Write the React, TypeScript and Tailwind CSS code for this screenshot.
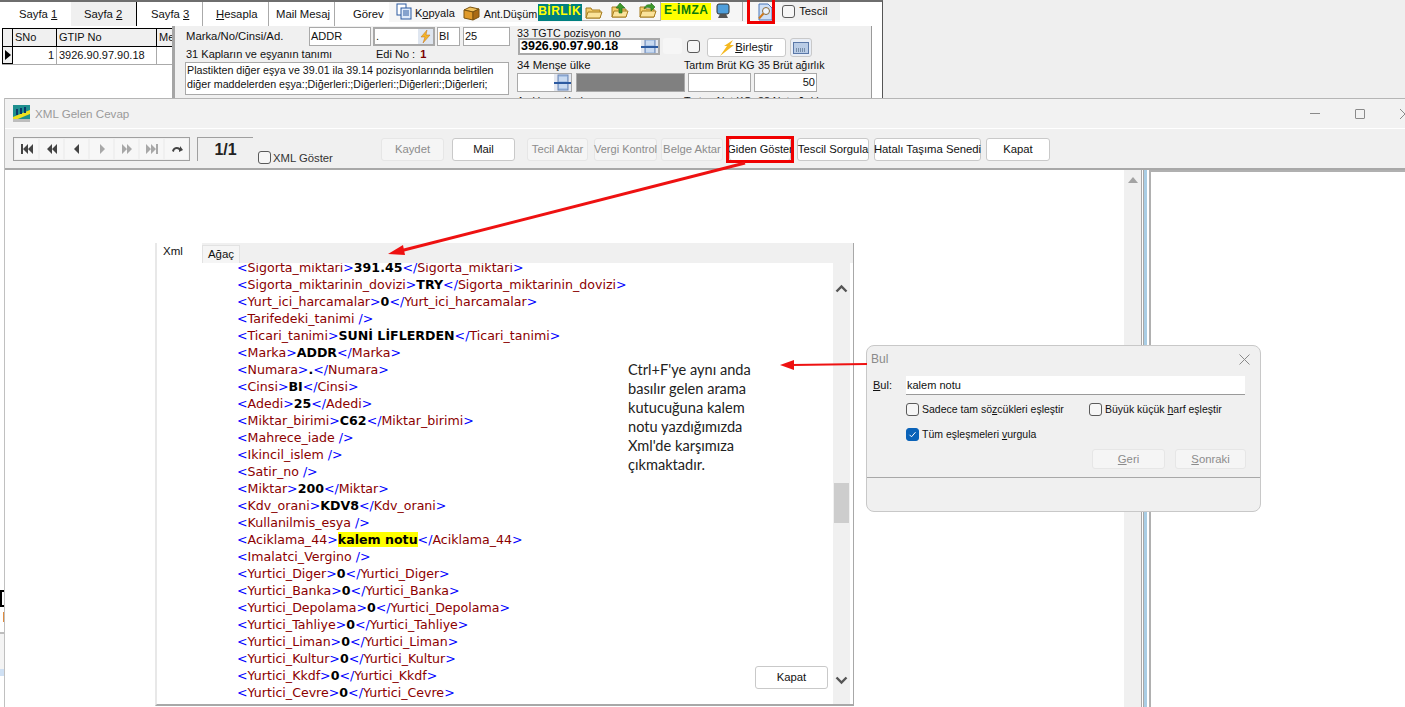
import React from "react";

const ui = { fontFamily: '"Liberation Sans", Arial, sans-serif' };

function Tab({ className, children }: { className: string; children: React.ReactNode }) {
  return <div className={`flex items-center h-[24px] text-[11.3px] text-[#111] whitespace-nowrap ${className}`}>{children}</div>;
}

function U({ children }: { children: React.ReactNode }) {
  return <span className="underline underline-offset-1">{children}</span>;
}

function Field({ className, children }: { className: string; children?: React.ReactNode }) {
  return (
    <div className={`flex items-center bg-white border-2 border-[#a9a9a9] px-[1px] text-[11px] text-[#111] overflow-hidden whitespace-nowrap ${className}`}>
      {children}
    </div>
  );
}

function LookupIcon() {
  return (
    <svg width="17" height="17" viewBox="0 0 17 17" className="shrink-0">
      <rect width="17" height="17" fill="#e4e8f0" />
      <rect x="4" y="1" width="10" height="15" fill="#a9c3e6" stroke="#6b86b5" />
      <path d="M5 4h8M5 6h8M5 11h8M5 13h8" stroke="#e8f0fa" />
      <rect x="0" y="8" width="17" height="2" fill="#2c5aa0" />
    </svg>
  );
}

function Folder({ arrow }: { arrow?: "up" | "right" }) {
  return (
    <svg width="18" height="18" viewBox="0 0 18 18">
      <path d="M1 15V5h5l1 2h8v8z" fill="#f4cd6a" stroke="#a67c1e" />
      <path d="M1 15l2-6h14l-2 6z" fill="#fbe39a" stroke="#a67c1e" />
      {arrow === "up" && <path d="M9 1l5 5h-3v5H8V6H5z" fill="#3d9a2c" stroke="#1e6a14" strokeWidth="0.6" />}
      {arrow === "right" && <path d="M5 7c1-4 4-5 7-4V1l4 4-4 4V6C9 5 7 5 5 7z" fill="#3d9a2c" stroke="#1e6a14" strokeWidth="0.6" />}
    </svg>
  );
}

function Btn({
  w,
  disabled,
  children,
  className,
}: {
  w: string;
  disabled?: boolean;
  children: React.ReactNode;
  className?: string;
}) {
  return (
    <div
      className={`flex items-center justify-center shrink-0 h-[23px] rounded-[3px] border text-[11.3px] whitespace-nowrap ${w} ${
        disabled ? "bg-[#f5f5f5] border-[#e6e6e6] text-[#8c8c8c]" : "bg-white border-[#c9c9c9] text-[#111]"
      } ${className ?? ""}`}
    >
      {children}
    </div>
  );
}

function NavBtn({ d, dim }: { d: string; dim?: boolean }) {
  return (
    <div className="flex items-center justify-center w-[23px] h-[20px] bg-[#f7f7f7]">
      <svg width="12" height="10" viewBox="0 0 12 10">
        <path d={d} fill={dim ? "#a8a8a8" : "#444"} />
      </svg>
    </div>
  );
}

function CheckBox({ checked, className }: { checked?: boolean; className?: string }) {
  return (
    <span
      className={`flex items-center justify-center shrink-0 w-[13px] h-[13px] rounded-[3px] border ${
        checked ? "bg-[#0a62b8] border-[#0a62b8]" : "bg-[#f6f6f6] border-[#5a5a5a]"
      } ${className ?? ""}`}
    >
      {checked && (
        <svg width="9" height="9" viewBox="0 0 9 9">
          <path d="M1.5 4.8l2 2 4-4.6" fill="none" stroke="#fff" strokeWidth="1" />
        </svg>
      )}
    </span>
  );
}

const T = ({ children }: { children: React.ReactNode }) => <span className="text-[#0000ff]">{children}</span>;
const N = ({ children }: { children: React.ReactNode }) => <span className="text-[#8b0000]">{children}</span>;

function Pair({ n, v, mark }: { n: string; v: string; mark?: boolean }) {
  return (
    <div className="h-[17px] leading-[17px]">
      <T>&lt;</T>
      <N>{n}</N>
      <T>&gt;</T>
      <b className={`text-black ${mark ? "bg-[#ffff00]" : ""}`}>{v}</b>
      <T>&lt;/</T>
      <N>{n}</N>
      <T>&gt;</T>
    </div>
  );
}

function Empty({ n }: { n: string }) {
  return (
    <div className="h-[17px] leading-[17px]">
      <T>&lt;</T>
      <N>{n}</N>
      <T> /&gt;</T>
    </div>
  );
}

export default function App() {
  return (
    <div className="relative w-[1405px] h-[707px] overflow-hidden bg-[#f0f0f0]" style={ui}>
      {/* Background application */}
      <div className="flex h-[98px] overflow-hidden">
        <div className="w-[883px] shrink-0 border-t-2 border-[#6e6e6e] border-r border-r-[#555] bg-white">
          <div className="flex h-[24px]">
            <Tab className="w-[71px] pl-[19px]">Sayfa&nbsp;<U>1</U></Tab>
            <Tab className="w-[66px] pl-[13px] bg-[#f0f0f0] border-r border-black">Sayfa&nbsp;<U>2</U></Tab>
            <Tab className="w-[66px] pl-[14px] border-r border-[#aaa]">Sayfa&nbsp;<U>3</U></Tab>
            <Tab className="w-[66px] pl-[13px] border-r border-[#aaa]"><U>H</U>esapla</Tab>
            <Tab className="w-[66px] pl-[7px] border-r border-[#aaa]">Mail Mesaj</Tab>
            <Tab className="w-[54px] pl-[18px]">Görev</Tab>
            <div className="flex items-start h-[20px] w-[451px] bg-[#f6f6f6]">
              <div className="ml-[7px] mt-[1px]">
                <svg width="16" height="17" viewBox="0 0 16 17">
                  <rect x="1" y="1" width="9" height="11" fill="#fff" stroke="#2c5aa0" />
                  <rect x="5" y="5" width="10" height="11" fill="#dfeafa" stroke="#2c5aa0" />
                  <path d="M7 8h6M7 10h6M7 12h6" stroke="#2c5aa0" />
                </svg>
              </div>
              <span className="ml-[3px] mt-[3px] w-[45px] text-[11px] text-[#111] whitespace-nowrap">K<U>o</U>pyala</span>
              <div className="ml-[3px] mt-[3px]">
                <svg width="17" height="16" viewBox="0 0 17 16">
                  <path d="M1 5l6-3 9 2-6 3z" fill="#f2c25c" stroke="#7a5310" />
                  <path d="M1 5v8l9 2V7z" fill="#e09a2b" stroke="#7a5310" />
                  <path d="M10 7v8l6-3V4z" fill="#a96a14" stroke="#7a5310" />
                </svg>
              </div>
              <span className="ml-[4px] mt-[4px] w-[54px] text-[10.8px] text-[#111] whitespace-nowrap">Ant.Düşüm</span>
              <div className="h-[17px] mt-[2px] w-[44px] bg-[#008080] text-[#ffff00] text-[12px] font-bold leading-[14px] text-center tracking-[0.5px]">BİRLİK</div>
              <div className="flex items-start w-[80px] h-[19px] border-b border-r border-[#b5b5b5]">
                <span className="ml-[3px] mt-[1px]"><Folder /></span>
                <span className="ml-[8px]"><Folder arrow="up" /></span>
                <span className="ml-[10px]"><Folder arrow="right" /></span>
              </div>
              <div className="h-[17px] mt-[1px] w-[50px] bg-[#ffff00] text-[#0a7a0a] text-[12px] font-bold leading-[15px] text-center tracking-[0.5px]">E-İMZA</div>
              <div className="ml-[5px] mt-[1px]">
                <svg width="14" height="17" viewBox="0 0 14 17">
                  <rect x="1" y="1" width="12" height="10" rx="2" fill="#4f9fdc" stroke="#333" />
                  <path d="M4 11h6l2 4H2z" fill="#555" />
                </svg>
              </div>
              <div className="ml-[12px] h-[19px] border-l border-[#aaa]" />
              <div className="ml-[14px] mt-[1px]">
                <svg width="16" height="18" viewBox="0 0 16 18">
                  <path d="M2 1h9l4 4v12H2z" fill="#cfe0f7" stroke="#4a76b8" />
                  <circle cx="9" cy="8" r="3.5" fill="#eef5ff" stroke="#8a6a3a" />
                  <path d="M6.500 10.500L2 15.500" stroke="#d07a1e" strokeWidth="2" />
                </svg>
              </div>
              <div className="flex items-center ml-[9px] h-[18px] w-[58px] bg-[#f0f0f0]">
                <CheckBox />
                <span className="ml-[4px] text-[11.3px] text-[#111]">Tescil</span>
              </div>
            </div>
          </div>

          <div className="flex h-[72px]">
            {/* Grid */}
            <div className="w-[172px] shrink-0 pl-[2px] pt-[2px] text-[11px] text-[#111]">
              <div className="flex h-[19px] bg-[#f0f0f0] border-y border-l border-black">
                <div className="w-[10px] border-r border-black" />
                <div className="w-[44px] border-r border-black pl-[2px] leading-[17px]">SNo</div>
                <div className="w-[100px] border-r border-black pl-[2px] leading-[17px]">GTIP No</div>
                <div className="flex-1 overflow-hidden pl-[2px] leading-[17px]">Me</div>
              </div>
              <div className="flex h-[18px] border-b border-[#aaa]">
                <div className="flex items-center justify-center w-[11px] bg-[#f0f0f0] border-x border-b border-black">
                  <svg width="6" height="10" viewBox="0 0 6 10"><path d="M0 0l6 5-6 5z" fill="#000" /></svg>
                </div>
                <div className="w-[44px] border-r border-[#aaa] text-right pr-[2px] leading-[17px]">1</div>
                <div className="w-[100px] border-r border-[#aaa] pl-[2px] leading-[17px]">3926.90.97.90.18</div>
              </div>
            </div>
            <div className="w-[3px] shrink-0 bg-[#a5a5a5]" />
            {/* Form */}
            <div className="flex w-[697px] shrink-0 bg-[#f0f0f0] border-r border-[#9a9a9a] pl-[11px] text-[11.3px] text-[#111]">
              <div className="w-[331px] shrink-0 pt-[1px]">
                <div className="flex items-center gap-[2px] h-[19px]">
                  <span className="w-[121px] whitespace-nowrap">Marka/No/Cinsi/Ad.</span>
                  <Field className="w-[62px] h-[19px] !border !border-[#a9a9a9]">ADDR</Field>
                  <Field className="w-[62px] h-[19px] justify-between !pr-0">
                    <span>.</span>
                    <svg width="15" height="15" viewBox="0 0 15 15">
                      <rect width="15" height="15" fill="#dfe6f0" />
                      <path d="M9 1L3 8h4l-2 6 7-8H8z" fill="#f3b52a" stroke="#c46f10" strokeWidth="0.5" />
                    </svg>
                  </Field>
                  <Field className="w-[23px] h-[19px] !border !border-[#a9a9a9]">BI</Field>
                  <Field className="w-[47px] h-[19px] ml-[1px] !border !border-[#a9a9a9]">25</Field>
                </div>
                <div className="flex items-center h-[16px] whitespace-nowrap text-[11px]">
                  <span className="w-[190px]">31 Kapların ve eşyanın tanımı</span>
                  <span>Edi No :</span>
                  <b className="ml-[5px] text-[#7a0000]">1</b>
                </div>
                <div className="w-[324px] h-[33px] -ml-[1px] bg-white border border-[#a9a9a9] px-[1px] leading-[14px] text-[10.7px] whitespace-nowrap overflow-hidden">
                  Plastikten diğer eşya ve 39.01 ila 39.14 pozisyonlarında belirtilen
                  <br />
                  diğer maddelerden eşya:;Diğerleri:;Diğerleri:;Diğerleri:;Diğerleri;
                </div>
                <div className="h-[12px] mt-[1px] -ml-[1px] leading-[14px]">Sigorta Kıymeti</div>
              </div>
              <div className="flex-1">
                <div className="h-[12px] leading-[14px] whitespace-nowrap text-[10.7px]">33 TGTC pozisyon no</div>
                <div className="flex items-start h-[20px] pl-[1px]">
                  <Field className="w-[142px] h-[17px] justify-between !pl-[1px] !pr-0">
                    <b className="text-[12.5px] text-black">3926.90.97.90.18</b>
                    <LookupIcon />
                  </Field>
                  <div className="w-[19px] h-[16px] ml-[3px] rounded-[3px] bg-[#f6f6f6]" />
                  <CheckBox className="ml-[5px] mt-[2px]" />
                  <Btn w="w-[79px]" className="ml-[7px] !h-[19px]">
                    <svg width="14" height="16" viewBox="0 0 14 16" className="mr-[1px]">
                      <path d="M13 0L4 6h3L0 16 14 5h-4z" fill="#f5b921" />
                    </svg>
                    <span><U>B</U>irleştir</span>
                  </Btn>
                  <div className="flex items-center justify-center w-[22px] h-[19px] ml-[4px] rounded-[3px] border border-[#c9c9c9] bg-[#e9eef6]">
                    <svg width="16" height="12" viewBox="0 0 16 12">
                      <rect x="0.5" y="0.5" width="15" height="11" fill="#b9cce6" stroke="#5a78a8" />
                      <path d="M3 7h10M3 9h10" stroke="#34506f" strokeDasharray="1 1" />
                    </svg>
                  </div>
                </div>
                <div className="flex h-[14px] leading-[15px] whitespace-nowrap">
                  <span className="w-[167px]">34 Menşe ülke</span>
                  <span className="w-[74px] text-[10.7px]">Tartım Brüt KG</span>
                  <span className="text-[10.7px]">35 Brüt ağırlık</span>
                </div>
                <div className="flex items-start h-[21px] mt-[1px]">
                  <Field className="w-[55px] h-[19px] justify-end !p-0 !border !border-[#a9a9a9]"><LookupIcon /></Field>
                  <div className="w-[109px] h-[19px] ml-[4px] bg-[#808080] border border-[#a9a9a9]" />
                  <Field className="w-[63px] h-[19px] ml-[3px] !border !border-[#a9a9a9]" />
                  <Field className="w-[63px] h-[19px] ml-[3px] justify-end !border !border-[#a9a9a9]">50</Field>
                </div>
                <div className="flex leading-[14px] whitespace-nowrap text-[10.7px]">
                  <span className="w-[167px]">Açıklama Kod</span>
                  <span className="w-[74px]">Tartım Net KG</span>
                  <span>38 Net ağırlık</span>
                </div>
              </div>
            </div>
            <div className="flex-1 bg-white" />
          </div>
        </div>
        <div className="flex-1 bg-[#efefef]" />
      </div>

      {/* XML Gelen Cevap window */}
      <div className="flex h-[609px]">
        <div className="w-[5px] shrink-0 bg-white border-r border-[#c0c0c0] flex flex-col">
          <div className="h-[492px] shrink-0" />
          <div className="h-[17px] shrink-0 border-2 border-black border-r-0" />
          <div className="h-[5px] shrink-0" />
          <div className="h-[10px] shrink-0 ml-[3px] bg-[#e08a3c]" />
          <div className="h-[10px] shrink-0" />
          <div className="h-[2px] shrink-0 bg-[#bdbdbd]" />
          <div className="h-[35px] shrink-0 bg-[#f4f4f4]" />
          <div className="h-[7px] shrink-0 bg-[#cfe0f3]" />
        </div>
        <div className="flex-1 flex flex-col border-t border-[#b5b5b5] min-w-0">
          <div className="flex items-center h-[30px] bg-[#f2f2f2] border-b border-white shrink-0">
            <svg width="17" height="17" viewBox="0 0 17 17" className="ml-[8px]">
              <rect width="17" height="17" fill="#1f8f8f" />
              <path d="M0 12L17 5v4L0 16z" fill="#f0e020" />
              <path d="M3 4h2v6H3zM7 3h2v6H7zM11 2h2v6h-2z" fill="#0a3a6a" />
              <rect y="14" width="17" height="3" fill="#bdbdbd" />
            </svg>
            <span className="ml-[5px] text-[11.6px] text-[#9a9a9a]">XML Gelen Cevap</span>
            <div className="flex-1" />
            <span className="w-[10px] h-px bg-[#8a8a8a]" />
            <span className="ml-[35px] w-[10px] h-[10px] border border-[#8a8a8a] rounded-[1px]" />
            <svg width="10" height="10" viewBox="0 0 10 10" className="ml-[35px] -mr-[5px] shrink-0">
              <path d="M0 0l10 10M10 0L0 10" stroke="#8a8a8a" />
            </svg>
          </div>
          <div className="flex items-start h-[41px] pt-[9px] pl-[8px] bg-[#f0f0f0] border-b-2 border-[#a8a8a8] shrink-0">
            <div className="flex gap-[2px] w-[177px] h-[24px] -mt-[1px] p-[1px] border border-[#a0a0a0] shrink-0">
              <NavBtn d="M0 0h2v10H0zM7 0v10L2 5zM12 0v10L7 5z" />
              <NavBtn d="M6 0v10L1 5zM11 0v10L6 5z" />
              <NavBtn d="M8 0v10L3 5z" />
              <NavBtn dim d="M4 0v10l5-5z" />
              <NavBtn dim d="M1 0v10l5-5zM6 0v10l5-5z" />
              <NavBtn dim d="M0 0v10l5-5zM5 0v10l5-5zM10 0h2v10h-2z" />
              <NavBtn d="M1 7c1-4 5-5 8-3V2l3 4-4 2V6C6 4 3 5 3 8z" />
            </div>
            <div className="flex items-center justify-center w-[56px] h-[24px] -mt-[1px] ml-[7px] border-t border-l border-[#a0a0a0] font-bold text-[16px] text-[#222] shrink-0">1/1</div>
            <CheckBox className="ml-[5px] mt-[13px]" />
            <span className="ml-[2px] mt-[12px] w-[58px] shrink-0 text-[11.3px] text-[#333] whitespace-nowrap">XML Göster</span>
            <Btn disabled w="w-[63px]" className="ml-[50px]">Kaydet</Btn>
            <Btn w="w-[63px]" className="ml-[8px]">Mail</Btn>
            <Btn disabled w="w-[61px]" className="ml-[12px]">Tecil Aktar</Btn>
            <Btn disabled w="w-[63px]" className="ml-[6px] !text-[11px]">Vergi Kontrol</Btn>
            <Btn disabled w="w-[62px]" className="ml-[4px]">Belge Aktar</Btn>
            <Btn w="w-[62px]" className="ml-[6px] !text-[11px]">Giden Göster</Btn>
            <Btn w="w-[72px]" className="ml-[6px]">Tescil Sorgula</Btn>
            <Btn w="w-[107px]" className="ml-[5px]">Hatalı Taşıma Senedi</Btn>
            <Btn w="w-[64px]" className="ml-[5px]">Kapat</Btn>
          </div>
          <div className="flex flex-1 min-h-0 bg-white">
            <div className="w-[1119px] shrink-0" />
            <div className="flex justify-center w-[17px] shrink-0 bg-[#f0f0f0] pt-[7px]">
              <svg width="10" height="6" viewBox="0 0 10 6"><path d="M5 0l5 6H0z" fill="#a3a3a3" /></svg>
            </div>
            <div className="w-[3px] shrink-0 bg-white border-x border-[#a8a8a8]" />
            <div className="w-[3px] shrink-0 bg-[#a9cde4]" />
            <div className="flex-1 border-l-2 border-t-2 border-[#b0b0b0] ml-[2px]" />
          </div>
        </div>
      </div>

      {/* Pasted XML panel */}
      <div className="absolute left-[155px] top-[243px] w-[699px] h-[463px] flex flex-col bg-white border-r border-b-2 border-[#a8a8a8] border-l-2 border-l-[#e8e8e8]">
        <div className="flex items-end h-[20px] shrink-0 bg-[#f0f0f0]">
          <div className="flex items-start w-[45px] h-[20px] pl-[6px] bg-white text-[11.5px] text-[#111]">Xml</div>
          <div className="flex items-center justify-center w-[38px] h-[18px] text-[11.5px] text-[#111] bg-[#f5f5f5] border-x border-t border-[#e2e2e2] pt-[1px]">Ağaç</div>
        </div>
        <div className="flex flex-1 min-h-0">
          <div
            className="w-[676px] shrink-0 pl-[80px] overflow-hidden text-[12.6px] whitespace-nowrap"
            style={{ fontFamily: '"DejaVu Sans", Verdana, sans-serif' }}
          >
            <div className="-mt-[4px]">
              <Pair n="Sigorta_miktari" v="391.45" />
              <Pair n="Sigorta_miktarinin_dovizi" v="TRY" />
              <Pair n="Yurt_ici_harcamalar" v="0" />
              <Empty n="Tarifedeki_tanimi" />
              <Pair n="Ticari_tanimi" v="SUNİ LİFLERDEN" />
              <Pair n="Marka" v="ADDR" />
              <Pair n="Numara" v="." />
              <Pair n="Cinsi" v="BI" />
              <Pair n="Adedi" v="25" />
              <Pair n="Miktar_birimi" v="C62" />
              <Empty n="Mahrece_iade" />
              <Empty n="Ikincil_islem" />
              <Empty n="Satir_no" />
              <Pair n="Miktar" v="200" />
              <Pair n="Kdv_orani" v="KDV8" />
              <Empty n="Kullanilmis_esya" />
              <Pair n="Aciklama_44" v="kalem notu" mark />
              <Empty n="Imalatci_Vergino" />
              <Pair n="Yurtici_Diger" v="0" />
              <Pair n="Yurtici_Banka" v="0" />
              <Pair n="Yurtici_Depolama" v="0" />
              <Pair n="Yurtici_Tahliye" v="0" />
              <Pair n="Yurtici_Liman" v="0" />
              <Pair n="Yurtici_Kultur" v="0" />
              <Pair n="Yurtici_Kkdf" v="0" />
              <Pair n="Yurtici_Cevre" v="0" />
            </div>
          </div>
          <div className="flex flex-col items-center w-[17px] shrink-0 bg-[#f0f0f0] pt-[21px] pb-[19px]">
            <svg width="13" height="9" viewBox="0 0 13 9"><path d="M1.500 7.500l5-5 5 5" fill="none" stroke="#555" strokeWidth="2.4" /></svg>
            <div className="h-[190px] shrink-0" />
            <div className="w-[15px] h-[40px] shrink-0 bg-[#cdcdcd]" />
            <div className="flex-1" />
            <svg width="13" height="9" viewBox="0 0 13 9"><path d="M1.500 1.500l5 5 5-5" fill="none" stroke="#555" strokeWidth="2.4" /></svg>
          </div>
        </div>
        <Btn w="w-[73px]" className="absolute left-[598px] top-[423px]">Kapat</Btn>
      </div>

      {/* Annotation */}
      <div
        className="absolute left-[628px] top-[360px] text-[14.6px] leading-[19px] text-[#222] whitespace-nowrap"
        style={{ fontFamily: 'Lato, "Noto Sans", sans-serif' }}
      >
        Ctrl+F'ye aynı anda
        <br />
        basılır gelen arama
        <br />
        kutucuğuna kalem
        <br />
        notu yazdığımızda
        <br />
        Xml'de karşımıza
        <br />
        çıkmaktadır.
      </div>

      {/* Bul dialog */}
      <div className="absolute left-[866px] top-[345px] w-[395px] h-[167px] flex flex-col rounded-[8px] border border-[#c8c8c8] bg-[#f0f0f0] overflow-hidden text-[11px] text-[#111]">
        <div className="flex items-center justify-between h-[26px] shrink-0 pl-[4px] pr-[10px] text-[#8a8a8a]">
          <span className="text-[12px]">Bul</span>
          <svg width="11" height="11" viewBox="0 0 11 11"><path d="M0.500 0.500l10 10M10.500 0.500l-10 10" stroke="#8a8a8a" /></svg>
        </div>
        <div className="flex items-center h-[25px] shrink-0 pl-[6px] pt-[2px]">
          <span className="w-[33px]"><U>B</U>ul:</span>
          <div className="flex items-center w-[339px] h-[19px] px-[1px] bg-white border-b border-[#9a9a9a]">kalem notu</div>
        </div>
        <div className="flex items-center h-[25px] shrink-0 pl-[39px] text-[10.5px]">
          <CheckBox />
          <span className="w-[167px] ml-[3px] whitespace-nowrap">Sadece tam sö<U>z</U>cükleri eşleştir</span>
          <CheckBox />
          <span className="ml-[3px] whitespace-nowrap">Büyük küçük <U>h</U>arf eşleştir</span>
        </div>
        <div className="flex items-center h-[25px] shrink-0 pl-[39px] text-[10.5px]">
          <CheckBox checked />
          <span className="ml-[3px] whitespace-nowrap">Tüm eşleşmeleri <U>v</U>urgula</span>
        </div>
        <div className="flex justify-end gap-[10px] h-[20px] shrink-0 pr-[14px] mt-[2px]">
          <Btn disabled w="w-[73px]" className="!h-[20px]"><span><U>G</U>eri</span></Btn>
          <Btn disabled w="w-[71px]" className="!h-[20px]"><span><U>S</U>onraki</span></Btn>
        </div>
        <div className="flex-1 mt-[8px] border-t border-[#a8a8a8]" />
      </div>

      {/* Red annotations */}
      <div className="absolute left-[747px] -top-[3px] w-[28px] h-[27px] border-[3px] border-[#f00000]" />
      <div className="absolute left-[726px] top-[136px] w-[68px] h-[27px] border-[3px] border-[#f00000]" />
      <svg className="absolute left-0 top-0 pointer-events-none" width="1405" height="707" viewBox="0 0 1405 707">
        <path d="M745 163L402 250.500" stroke="#ee1111" strokeWidth="3" />
        <path d="M388 254l15-9 2 10z" fill="#ee1111" />
        <path d="M867 364L792 365" stroke="#ee1111" strokeWidth="2" />
        <path d="M780 365l14-5v10z" fill="#ee1111" />
      </svg>
    </div>
  );
}
